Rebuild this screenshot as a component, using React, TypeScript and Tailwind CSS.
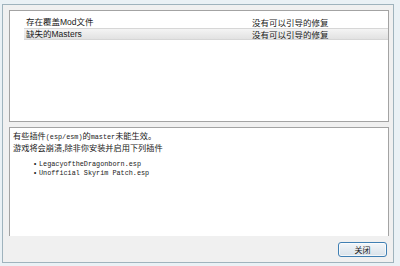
import React from 'react';

const rows = [
  { name: '存在覆盖Mod文件', fix: '没有可以引导的修复', selected: false },
  { name: '缺失的Masters', fix: '没有可以引导的修复', selected: true },
];

const plugins = ['LegacyoftheDragonborn.esp', 'Unofficial Skyrim Patch.esp'];

const cjk = { fontFamily: '"Noto Sans CJK SC", "Noto Sans", sans-serif' };
const ui = { fontFamily: '"Liberation Sans", "Noto Sans CJK SC", sans-serif' };
const mono = { fontFamily: '"Liberation Mono", monospace' };

const App = () => {
  return (
    <div className="w-[400px] h-[266px] bg-[#eaf1f5] pt-[4px] pl-[2px] pr-[6px] pb-[3px]">
      <div className="h-full flex flex-col bg-[#f0f0f0] border border-[#9fb3bd] pl-[6px] pr-[4px] pt-[5px]">
        {/* top list of checks */}
        <div className="h-[112px] shrink-0 bg-white border border-[#a3a3a3] pt-[5px]">
          {rows.map((r) => (
            <div
              key={r.name}
              className={`ml-[14px] h-[12px] flex items-center text-[8.5px] leading-[12px] text-[#1a1a1a] ${
                r.selected ? 'bg-gradient-to-b from-[#f4f4f4] to-[#e2e2e2] border-y border-[#d6d6d6]' : ''
              }`}
              style={ui}
            >
              <span className="w-[228px] pl-[2px] whitespace-nowrap">{r.name}</span>
              <span className="whitespace-nowrap" style={cjk}>{r.fix}</span>
            </div>
          ))}
        </div>

        {/* description */}
        <div className="mt-[5px] h-[109px] shrink-0 bg-white border-t border-l border-r border-[#a3a3a3] pl-[3px] pt-[2px] text-[8.2px] leading-[10px] text-[#1a1a1a]" style={cjk}>
          <div className="whitespace-nowrap">
            有些插件<span className="text-[6.8px]" style={mono}>(esp/esm)</span>的<span className="text-[6.8px]" style={mono}>master</span>未能生效。
          </div>
          <div className="whitespace-nowrap">游戏将会崩溃,除非你安装并启用下列插件</div>
          <ul className="mt-[8px] pl-[20px]">
            {plugins.map((p) => (
              <li key={p} className="flex items-center h-[9px] text-[6.8px] leading-[9px] whitespace-nowrap" style={mono}>
                <span className="w-[6px] text-[7px]">•</span>
                {p}
              </li>
            ))}
          </ul>
        </div>

        {/* button bar */}
        <div className="flex-1 flex justify-end items-start pt-[6px] pr-[2px]">
          <button
            className="w-[49px] h-[15px] rounded-[3px] border border-[#3f7fb3] bg-gradient-to-b from-[#f3f6f9] to-[#d9e2ea] text-[8px] leading-[13px] text-[#1a1a1a] shadow-[inset_0_0_0_1px_rgba(255,255,255,0.7)]"
            style={cjk}
          >
            关闭
          </button>
        </div>
      </div>
    </div>
  );
};

export default App;
